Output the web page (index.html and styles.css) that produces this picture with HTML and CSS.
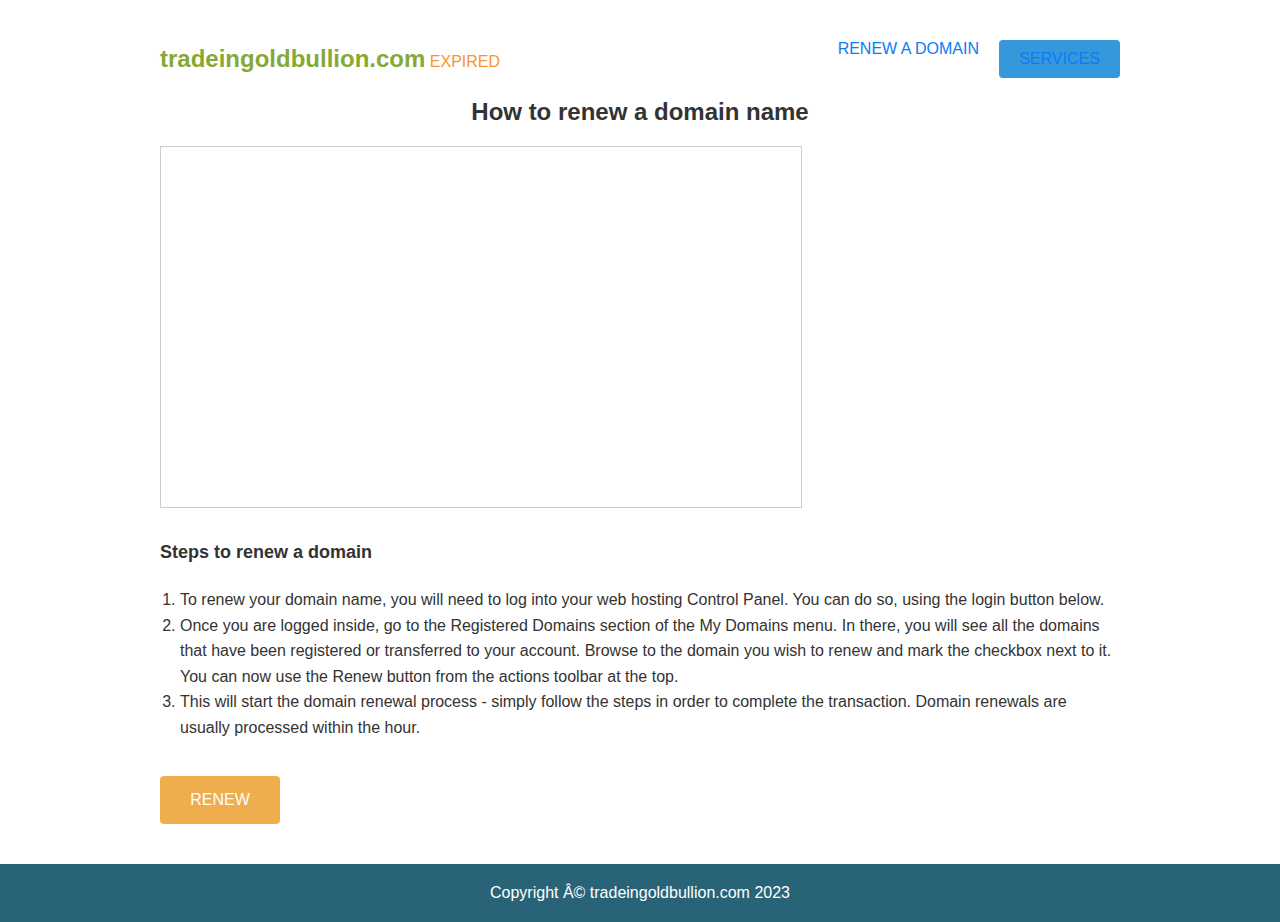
FILE: index.html
```html
<!DOCTYPE html>
<html>
<head>
<meta charset="utf-8">
<title>tradeingoldbullion.com</title>
<link rel="stylesheet" href="styles.css">
</head>
<body>
<div class="wrap">
  <header class="top">
    <div class="brand"><span class="name">tradeingoldbullion.com</span> <span class="expired">EXPIRED</span></div>
    <nav class="nav">
      <a class="nav-link" href="#">RENEW A DOMAIN</a>
      <a class="nav-btn" href="#">SERVICES</a>
    </nav>
  </header>
  <main>
    <h1 class="title">How to renew a domain name</h1>
    <div class="video"></div>
    <h2 class="steps-title">Steps to renew a domain</h2>
    <ol class="steps">
      <li>To renew your domain name, you will need to log into your web hosting Control Panel. You can do so, using the login button below.</li>
      <li>Once you are logged inside, go to the Registered Domains section of the My Domains menu. In there, you will see all the domains that have been registered or transferred to your account. Browse to the domain you wish to renew and mark the checkbox next to it. You can now use the Renew button from the actions toolbar at the top.</li>
      <li>This will start the domain renewal process - simply follow the steps in order to complete the transaction. Domain renewals are usually processed within the hour.</li>
    </ol>
    <a class="renew" href="#">RENEW</a>
  </main>
</div>
<footer class="foot">Copyright Â© tradeingoldbullion.com 2023</footer>
</body>
</html>
```
FILE: styles.css
```css
html, body { margin: 0; padding: 0; }
body {
  font-family: "Liberation Sans", Arial, sans-serif;
  color: #333;
  background: #fff;
}
.wrap {
  width: 960px;
  margin: 0 auto;
  padding-top: 40px;
  padding-bottom: 40px;
}
.top {
  display: flex;
  justify-content: space-between;
  align-items: flex-start;
  height: 38px;
}
.brand { padding-top: 5px; }
.name {
  font-size: 24px;
  font-weight: bold;
  color: #86a834;
}
.expired {
  font-size: 16px;
  color: #f7962e;
}
.nav { display: flex; align-items: flex-start; gap: 20px; }
.nav-link {
  color: #0a7cf5;
  text-decoration: none;
  font-size: 16px;
  line-height: 18px;
}
.nav-btn {
  display: block;
  width: 121px;
  height: 38px;
  line-height: 37px;
  text-align: center;
  background: #3598db;
  color: #0a7cf5;
  border-radius: 4px;
  text-decoration: none;
  font-size: 16px;
}
.title {
  text-align: center;
  font-size: 24px;
  line-height: 28px;
  margin: 20px 0 20px;
  color: #333;
}
.video {
  width: 640px;
  height: 360px;
  border: 1px solid #ccc;
}
.steps-title {
  font-size: 18px;
  line-height: 22px;
  margin: 33px 0 24px;
}
.steps {
  margin: 0;
  padding-left: 20px;
  font-size: 16px;
  line-height: 25.6px;
}
.renew {
  display: block;
  width: 120px;
  height: 48px;
  line-height: 48px;
  margin-top: 35px;
  text-align: center;
  background: #f0ad4e;
  color: #fff;
  border-radius: 4px;
  text-decoration: none;
  font-size: 16px;
}
.foot {
  background: #296378;
  color: #fff;
  text-align: center;
  font-size: 16px;
  height: 58px;
  line-height: 58px;
}
```
